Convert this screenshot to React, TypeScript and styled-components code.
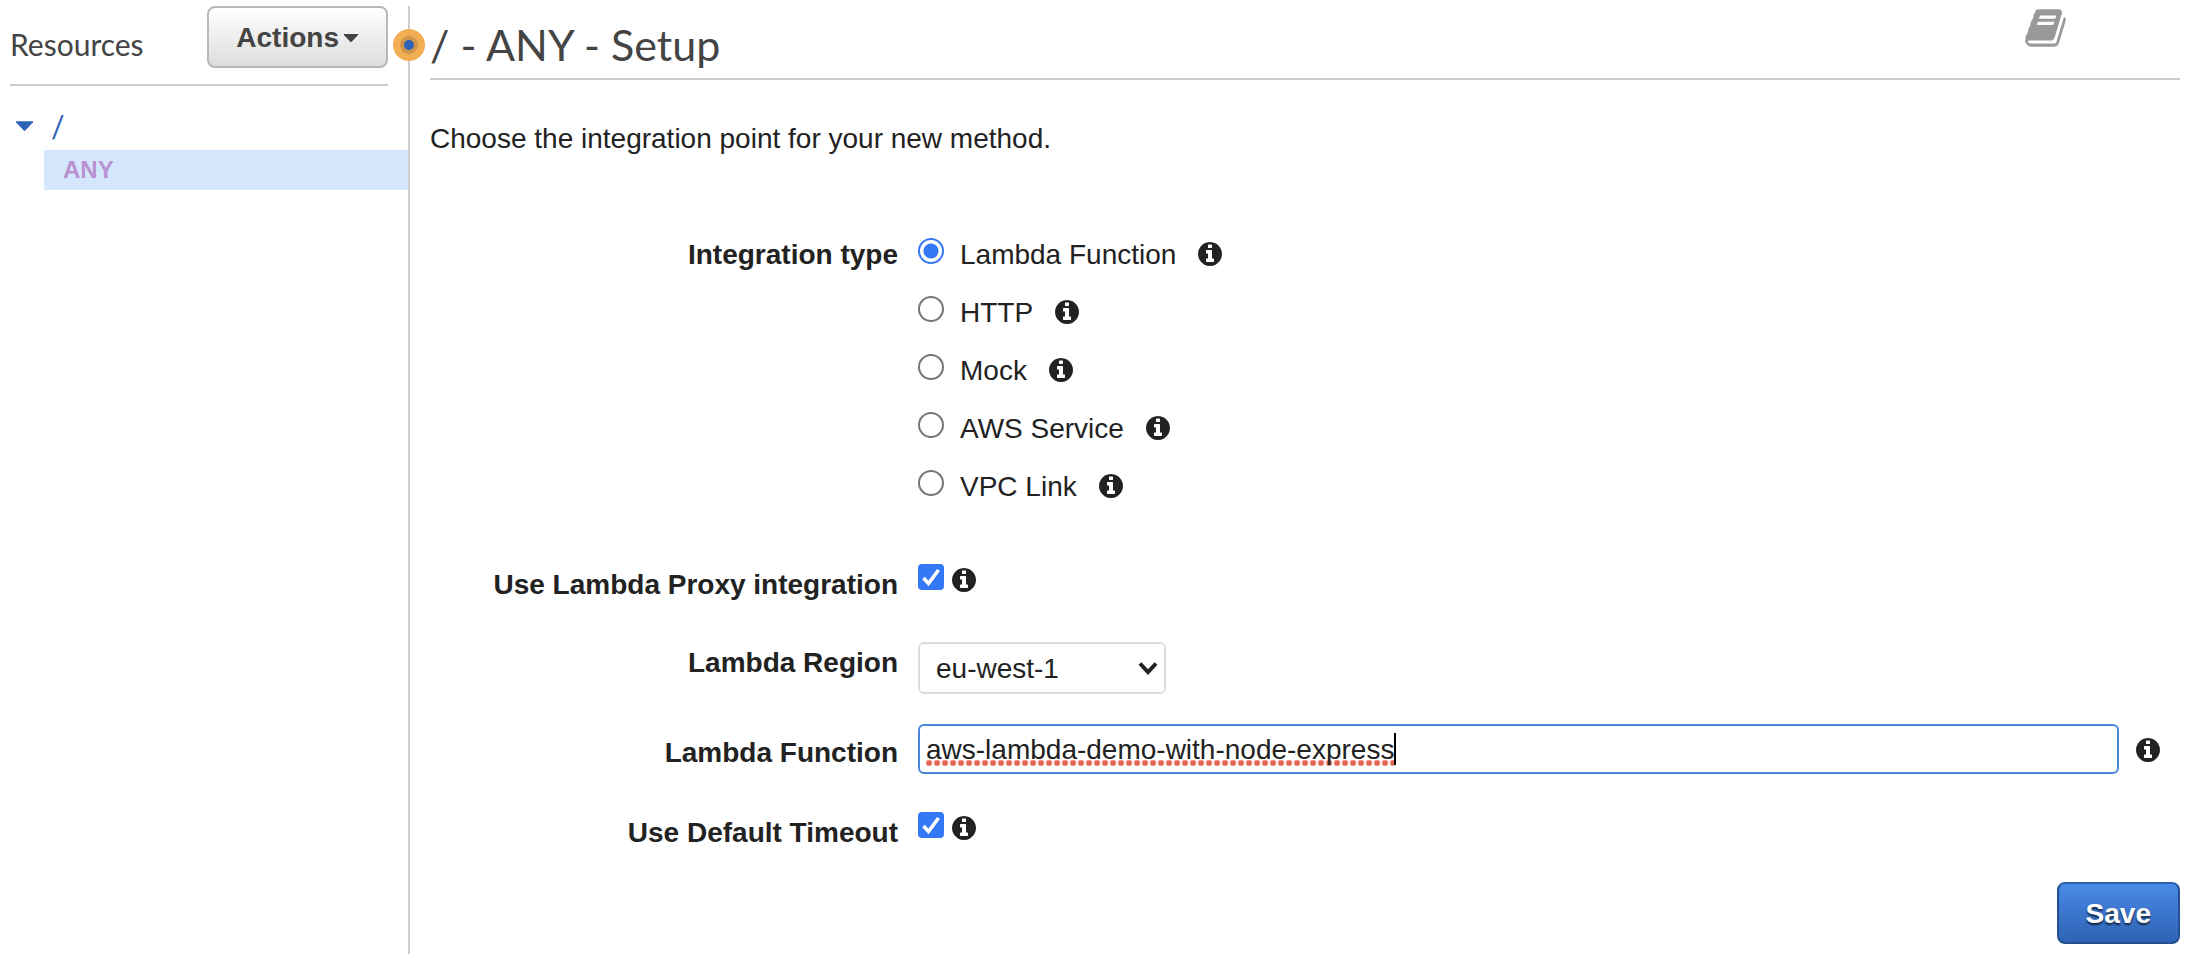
import React, { useState } from "react";
import styled, { createGlobalStyle, css } from "styled-components";

const ink = "#222222";
const heading = "#444444";
const rule = "#cccccc";
const accent = "#3478f6";
const sans = `"Liberation Sans", Arial, Helvetica, sans-serif`;

const GlobalStyle = createGlobalStyle`
  *, *::before, *::after { box-sizing: border-box; }
  body { margin: 0; background: #ffffff; color: ${ink}; font: 28px/42px ${sans}; }
  button, input, select { font: inherit; color: inherit; margin: 0; }
`;

const Page = styled.div`
  display: grid;
  grid-template-columns: 408px minmax(0, 1fr);
  min-height: 100vh;
  padding-top: 6px;
`;

const Sidebar = styled.aside`
  min-width: 0;
`;

const SidebarHeader = styled.header`
  display: flex;
  justify-content: space-between;
  align-items: flex-start;
  height: 80px;
  margin: 0 20px 0 10px;
  border-bottom: 2px solid ${rule};
`;

const SidebarTitle = styled.h2`
  margin: 18px 0 0;
  font: 400 30px/40px Lato, sans-serif;
  color: ${heading};
`;

const buttonShape = css`
  display: flex;
  align-items: center;
  justify-content: center;
  height: 62px;
  padding: 2px 27px 0;
  border-radius: 8px;
  font-weight: 700;
`;

const ActionsButton = styled.button`
  ${buttonShape}
  gap: 4px;
  border: 2px solid #b8b8b8;
  background: linear-gradient(#ffffff, #dddddd);
  color: ${heading};
`;

const SaveButton = styled.button`
  ${buttonShape}
  border: 2px solid #23508e;
  border-top-color: #2e63b0;
  background: linear-gradient(#4a8ae6, #2e63b5);
  color: #ffffff;
  text-shadow: 0 2px 2px rgba(0, 0, 0, 0.7);
`;

const Caret = styled.svg`
  display: block;
  flex: none;
  fill: currentColor;
`;

const Tree = styled.ul`
  list-style: none;
  margin: 20px 0 0;
  padding: 0;
`;

const Branch = styled.ul`
  list-style: none;
  margin: 0 0 0 44px;
  padding: 0;
`;

const RootLink = styled.a`
  display: flex;
  align-items: center;
  gap: 18px;
  height: 44px;
  padding: 0 0 5px 16px;
  color: #2e63b8;
  font: 400 30px/38px Lato, sans-serif;
  text-decoration: none;
`;

const MethodLink = styled.a`
  display: block;
  padding-left: 19px;
  background: #d5e7fd;
  color: #b892d1;
  font-size: 24px;
  font-weight: 700;
  line-height: 40px;
  text-decoration: none;
`;

const Main = styled.main`
  position: relative;
  min-width: 0;
  padding: 0 14px 10px 20px;
  border-left: 2px solid ${rule};
`;

const Handle = styled.svg`
  position: absolute;
  top: 23px;
  left: -17px;
`;

const TitleBar = styled.header`
  display: flex;
  justify-content: space-between;
  align-items: flex-start;
  height: 74px;
  padding-right: 114px;
  border-bottom: 2px solid ${rule};
`;

const Title = styled.h1`
  margin: 11px 0 0;
  font: 400 43px/56px Lato, sans-serif;
  color: ${heading};
`;

const DocsLink = styled.a`
  display: block;
  margin-top: 3px;
  color: #999999;
  svg { display: block; fill: currentColor; }
`;

const Intro = styled.p`
  margin: 38px 0 74px;
`;

const Row = styled.div<{ $gap?: number }>`
  display: grid;
  grid-template-columns: 468px minmax(0, 1fr);
  column-gap: 20px;
  margin-bottom: ${(p) => p.$gap ?? 0}px;
`;

const labelStyle = css<{ $drop?: boolean }>`
  padding-top: ${(p) => (p.$drop ? 8 : 0)}px;
  font-weight: 700;
  text-align: right;
`;
const RowLabel = styled.label<{ $drop?: boolean }>`${labelStyle}`;
const GroupLabel = styled.span`${labelStyle}`;

const Options = styled.div`
  display: grid;
  gap: 16px;
`;

const Option = styled.div`
  display: flex;
  align-items: flex-start;
  gap: 16px;
`;

const Radio = styled.input`
  appearance: none;
  flex: none;
  width: 26px;
  height: 26px;
  margin-top: 4px;
  border: 2px solid #767676;
  border-radius: 50%;
  &:checked {
    border-color: ${accent};
    background: radial-gradient(circle, ${accent} 7px, transparent 8px);
  }
`;

const OptionText = styled.label`
  margin-right: 6px;
`;

const CheckLine = styled.div`
  display: flex;
  align-items: flex-start;
  gap: 8px;
`;

const tick = encodeURIComponent(
  `<svg xmlns="http://www.w3.org/2000/svg" viewBox="0 0 26 26"><path d="M5.500 14l5 5.500L20.500 6" fill="none" stroke="#fff" stroke-width="3.600"/></svg>`
);

const Checkbox = styled.input`
  appearance: none;
  width: 26px;
  height: 26px;
  border: 2px solid #767676;
  border-radius: 4px;
  &:checked {
    border: 0;
    background: ${accent} url("data:image/svg+xml,${tick}");
  }
`;

const InfoButton = styled.button<{ $top: number }>`
  flex: none;
  margin-top: ${(p) => p.$top}px;
  padding: 0;
  border: 0;
  background: none;
  svg { display: block; fill: ${ink}; }
`;

const chevron = encodeURIComponent(
  `<svg xmlns="http://www.w3.org/2000/svg" viewBox="0 0 20 14"><path d="M2 2.500l8 8.500 8-8.500" fill="none" stroke="#222" stroke-width="4"/></svg>`
);

const Select = styled.select`
  appearance: none;
  width: 248px;
  height: 52px;
  padding: 2px 40px 0 16px;
  border: 2px solid #dddddd;
  border-radius: 6px;
  background: #ffffff url("data:image/svg+xml,${chevron}") no-repeat right 6px center / 20px 14px;
`;

const FieldLine = styled.div`
  display: flex;
  align-items: flex-start;
  gap: 17px;
  padding-right: 20px;
`;

const FieldBox = styled.div`
  display: flex;
  align-items: center;
  flex: 1;
  min-width: 0;
  height: 50px;
  padding: 0 6px;
  border: 2px solid #4a86d8;
  border-radius: 6px;
  &::after {
    content: "";
    width: 2px;
    height: 32px;
    background: #000000;
  }
`;

const FieldInput = styled.input`
  field-sizing: content;
  min-width: 20px;
  max-width: 100%;
  height: 34px;
  padding: 2px 0 0;
  border: 0;
  outline: 0;
  background: radial-gradient(circle at 3px 3px, #e8604f 2px, transparent 4px) left bottom / 8px 6px repeat-x;
`;

const Footer = styled.footer`
  display: flex;
  justify-content: flex-end;
`;

function DownCaret({ width, height }: { width: number; height: number }) {
  return (
    <Caret width={width} height={height} viewBox="0 0 16 9" aria-hidden="true">
      <path d="M0 0h16v1L8.500 9h-1L0 1z" />
    </Caret>
  );
}

function Info({ about, top }: { about: string; top: number }) {
  return (
    <InfoButton type="button" aria-label={`About ${about}`} $top={top}>
      <svg width="24" height="24" viewBox="128 128 1536 1536" aria-hidden="true">
        <path d="M1152 1376v-160q0-14-9-23t-23-9h-96v-512q0-14-9-23t-23-9h-320q-14 0-23 9t-9 23v160q0 14 9 23t23 9h96v320h-96q-14 0-23 9t-9 23v160q0 14 9 23t23 9h448q14 0 23-9t9-23zm-128-896v-160q0-14-9-23t-23-9h-192q-14 0-23 9t-9 23v160q0 14 9 23t23 9h192q14 0 23-9t9-23zm640 416q0 209-103 385.500t-279.500 279.500-385.500 103-385.500-103-279.500-279.500-103-385.500 103-385.500 279.500-279.500 385.500-103 385.500 103 279.500 279.500 103 385.500z" />
      </svg>
    </InfoButton>
  );
}

const integrations = ["Lambda Function", "HTTP", "Mock", "AWS Service", "VPC Link"];

export default function App() {
  const [type, setType] = useState("Lambda Function");
  const [proxy, setProxy] = useState(true);
  const [timeout, setDefaultTimeout] = useState(true);
  const [fn, setFn] = useState("aws-lambda-demo-with-node-express");

  return (
    <>
      <GlobalStyle />
      <Page>
        <Sidebar>
          <SidebarHeader>
            <SidebarTitle>Resources</SidebarTitle>
            <ActionsButton type="button">
              Actions
              <DownCaret width={16} height={8} />
            </ActionsButton>
          </SidebarHeader>
          <Tree>
            <li>
              <RootLink href="#root">
                <DownCaret width={17} height={10} />
                /
              </RootLink>
              <Branch>
                <li>
                  <MethodLink href="#any">ANY</MethodLink>
                </li>
              </Branch>
            </li>
          </Tree>
        </Sidebar>

        <Main>
          <Handle width="32" height="32" viewBox="0 0 32 32" aria-hidden="true">
            <circle cx="16" cy="16" r="16" fill="#f2a744" fillOpacity="0.92" />
            <circle cx="16" cy="16" r="9" fill="#cf964b" />
            <circle cx="16" cy="16" r="5" fill="#2e63b8" />
          </Handle>
          <TitleBar>
            <Title>/ - ANY - Setup</Title>
            <DocsLink href="#docs" aria-label="Documentation">
              <svg width="41" height="38" viewBox="56 128 1680 1536" aria-hidden="true">
                <path d="M1703 478q40 57 18 129l-275 906q-19 64-76.500 107.500t-122.500 43.500h-923q-77 0-148.500-53.500t-99.500-131.500q-24-67-2-127 0-4 3-27t4-37q1-8-3-21.500t-3-19.500q2-11 8-21t16.500-23.500 16.500-23.500q23-38 45-91.500t30-91.500q3-10 .5-30t-.5-28q3-11 17-28t17-23q21-36 42-92t25-90q1-9-2.500-32t.5-28q4-13 22-30.500t22-22.500q19-26 42.500-84.500t27.500-96.500q1-8-3-25.500t-2-26.500q2-8 9-18t18-23 17-21q8-12 16.500-30.500t15-35 16-36 19.500-32 26.500-23.500 36-11.500 47.500 5.500l-1 3q38-9 51-9h761q74 0 114 56t18 130l-274 906q-36 119-71.500 153.500t-128.500 34.500h-869q-27 0-38 15-11 16-1 43 24 70 144 70h923q29 0 56-15.500t35-41.500l300-987q7-22 5-57 38 15 59 43zm-1064 2q-4 13 2 22.500t20 9.500h608q13 0 25.500-9.500t16.500-22.500l21-64q4-13-2-22.500t-20-9.500h-608q-13 0-25.500 9.500t-16.500 22.500zm-83 256q-4 13 2 22.500t20 9.500h608q13 0 25.500-9.500t16.500-22.500l21-64q4-13-2-22.500t-20-9.500h-608q-13 0-25.500 9.500t-16.500 22.500z" />
              </svg>
            </DocsLink>
          </TitleBar>

          <Intro>Choose the integration point for your new method.</Intro>

          <form onSubmit={(e) => e.preventDefault()}>
            <Row $gap={56} role="radiogroup" aria-labelledby="type-label">
              <GroupLabel id="type-label">Integration type</GroupLabel>
              <Options>
                {integrations.map((name, i) => (
                  <Option key={name}>
                    <Radio
                      type="radio"
                      id={`type-${i}`}
                      name="type"
                      checked={type === name}
                      onChange={() => setType(name)}
                    />
                    <OptionText htmlFor={`type-${i}`}>{name}</OptionText>
                    <Info about={name} top={8} />
                  </Option>
                ))}
              </Options>
            </Row>

            <Row $gap={36}>
              <RowLabel htmlFor="proxy">Use Lambda Proxy integration</RowLabel>
              <CheckLine>
                <Checkbox type="checkbox" id="proxy" checked={proxy} onChange={() => setProxy(!proxy)} />
                <Info about="Lambda Proxy integration" top={4} />
              </CheckLine>
            </Row>

            <Row $gap={30}>
              <RowLabel htmlFor="region">Lambda Region</RowLabel>
              <Select id="region" defaultValue="eu-west-1">
                <option>eu-west-1</option>
              </Select>
            </Row>

            <Row $gap={38}>
              <RowLabel htmlFor="function" $drop>Lambda Function</RowLabel>
              <FieldLine>
                <FieldBox>
                  <FieldInput
                    type="text"
                    id="function"
                    spellCheck={false}
                    value={fn}
                    onChange={(e) => setFn(e.target.value)}
                  />
                </FieldBox>
                <Info about="the function name" top={14} />
              </FieldLine>
            </Row>

            <Row $gap={28}>
              <RowLabel htmlFor="timeout">Use Default Timeout</RowLabel>
              <CheckLine>
                <Checkbox
                  type="checkbox"
                  id="timeout"
                  checked={timeout}
                  onChange={() => setDefaultTimeout(!timeout)}
                />
                <Info about="the default timeout" top={4} />
              </CheckLine>
            </Row>

            <Footer>
              <SaveButton type="submit">Save</SaveButton>
            </Footer>
          </form>
        </Main>
      </Page>
    </>
  );
}
